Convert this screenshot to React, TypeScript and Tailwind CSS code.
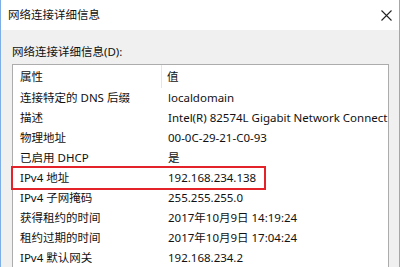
import React from 'react'

type Row = { name: string, value: string, highlight?: boolean }

const rows: Row[] = [
  { name: '连接特定的 DNS 后缀', value: 'localdomain' },
  { name: '描述', value: 'Intel(R) 82574L Gigabit Network Connection' },
  { name: '物理地址', value: '00-0C-29-21-C0-93' },
  { name: '已启用 DHCP', value: '是' },
  { name: 'IPv4 地址', value: '192.168.234.138', highlight: true },
  { name: 'IPv4 子网掩码', value: '255.255.255.0' },
  { name: '获得租约的时间', value: '2017年10月9日 14:19:24' },
  { name: '租约过期的时间', value: '2017年10月9日 17:04:24' },
  { name: 'IPv4 默认网关', value: '192.168.234.2' },
]

const CloseIcon = () => (
  <svg width="11" height="11" viewBox="0 0 11 11" className="text-[#222]">
    <path d="M0.5 0.5 L10.5 10.5 M10.5 0.5 L0.5 10.5" stroke="currentColor" strokeWidth="1.1" fill="none" />
  </svg>
)

export default function App() {
  return (
    <div
      className="w-[400px] h-[267px] overflow-hidden flex flex-col border-x border-[#7eaee6] text-[11.5px] text-[#111]"
      style={{ fontFamily: '"Noto Sans", "Noto Sans CJK SC", sans-serif' }}
    >
      {/* title bar */}
      <div className="h-[30px] shrink-0 bg-white flex items-center justify-between pl-[7px] pr-[7px]">
        <span className="leading-none">网络连接详细信息</span>
        <CloseIcon />
      </div>

      {/* dialog body */}
      <div className="flex-1 bg-[#f0f0f0] pl-[11px] pr-[10px] pt-[14px] flex flex-col">
        <div className="h-[15px] leading-[15px] mb-[5px]">网络连接详细信息(D):</div>

        <div className="flex-1 bg-white border border-[#acacac] border-b-0">
          <div className="flex h-[23px] items-center">
            <div className="w-[149px] pl-[7px] self-stretch flex items-center border-r border-[#e5e5e5]">属性</div>
            <div className="pl-[5px]">值</div>
          </div>
          {rows.map((row) => (
            <div key={row.name} className="relative flex h-[20px] items-center">
              <div className="w-[150px] pl-[7px] whitespace-nowrap">{row.name}</div>
              <div className="flex-1 pl-[5px] whitespace-nowrap overflow-hidden">{row.value}</div>
              {row.highlight && (
                <div className="absolute -left-[2px] -top-[2px] w-[255px] h-[24px] border-2 border-[#e4222a]" />
              )}
            </div>
          ))}
        </div>
      </div>
    </div>
  )
}
